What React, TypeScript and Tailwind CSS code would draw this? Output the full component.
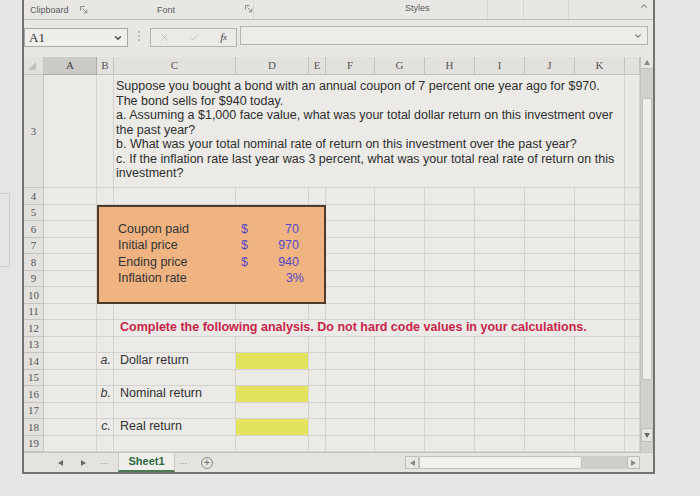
import React from "react";
import { X, Check, ChevronDown, ChevronUp } from "lucide-react";

function Launcher() {
  return (
    <svg width="8" height="8" viewBox="0 0 8 8">
      <path d="M0.5 4.5V0.5H4.5" fill="none" stroke="#8c8c8a" strokeWidth="1" />
      <path d="M2.5 2.5L6.8 6.8M6.8 3.8V6.8H3.8" fill="none" stroke="#8c8c8a" strokeWidth="1" />
    </svg>
  );
}

function Tri({ dir, color = "#5e5e5c" }: { dir: "l" | "r" | "u" | "d"; color?: string }) {
  const pts =
    dir === "l" ? "5,0 5,6 0,3" : dir === "r" ? "0,0 0,6 5,3" : dir === "u" ? "0,5 6,5 3,0" : "0,0 6,0 3,5";
  const w = dir === "l" || dir === "r" ? 5 : 6;
  const h = dir === "l" || dir === "r" ? 6 : 5;
  return (
    <svg width={w} height={h} viewBox={`0 0 ${w} ${h}`}>
      <polygon points={pts} fill={color} />
    </svg>
  );
}

const LETTERS = ["", "A", "B", "C", "D", "E", "F", "G", "H", "I", "J", "K", ""];
const ITEMS: Record<number, [string, string]> = {
  13: ["a.", "Dollar return"],
  15: ["b.", "Nominal return"],
  17: ["c.", "Real return"],
};

const QUESTION = [
  "Suppose you bought a bond with an annual coupon of 7 percent one year ago for $970.",
  "The bond sells for $940 today.",
  "a. Assuming a $1,000 face value, what was your total dollar return on this investment over",
  "the past year?",
  "b. What was your total nominal rate of return on this investment over the past year?",
  "c. If the inflation rate last year was 3 percent, what was your total real rate of return on this",
  "investment?",
];

const DATA: [string, string, string][] = [
  ["Coupon paid", "$", "70"],
  ["Initial price", "$", "970"],
  ["Ending price", "$", "940"],
  ["Inflation rate", "", "3%"],
];

function covered(r: number, c: number) {
  return (
    (r === 2 && c >= 4 && c <= 12) ||
    (r >= 4 && r <= 9 && c >= 3 && c <= 6) ||
    (r === 11 && c >= 4 && c <= 12)
  );
}

const base = "border-r border-b border-[#d3d2ce] min-w-0 overflow-hidden";
const hdr =
  "border-r border-b border-[#c4c3bf] bg-[#e2e1de] flex items-center justify-center font-['Liberation_Serif',serif] text-[11px] text-[#555]";

function Cell({ r, c }: { r: number; c: number }) {
  if (r === 1) {
    if (c === 1)
      return (
        <div className={hdr}>
          <svg width="8" height="8" viewBox="0 0 8 8" className="-ml-[3px]">
            <polygon points="8,0 8,8 0,8" fill="#c2c1bd" />
          </svg>
        </div>
      );
    if (c === 2)
      return (
        <div className="border-r border-b border-[#aeada9] bg-[#cbcac6] flex items-center justify-center font-['Liberation_Serif',serif] text-[11px] text-[#3c3c3c]">
          A
        </div>
      );
    return <div className={hdr}>{LETTERS[c - 1]}</div>;
  }
  if (c === 1) return <div className={hdr}>{r + 1}</div>;
  const item = ITEMS[r];
  if (item && c === 3)
    return (
      <div className={base + " flex items-center justify-end pr-[2px] italic text-[12.5px] text-[#3a3a3a]"}>
        {item[0]}
      </div>
    );
  if (item && c === 4)
    return (
      <div className={base + " flex items-center pl-[6px] text-[12.5px] text-[#303030] whitespace-nowrap"}>
        {item[1]}
      </div>
    );
  if (item && c === 5) return <div className={base + " bg-[#e4e35e]"} />;
  return <div className={base} />;
}

function Sheet() {
  const cells: React.ReactNode[] = [];
  for (let r = 1; r <= 18; r++) {
    for (let c = 1; c <= 13; c++) {
      if (covered(r, c)) continue;
      cells.push(<Cell key={`${r}-${c}`} r={r} c={c} />);
    }
  }
  return (
    <div className="grid w-[616px] h-[395px] shrink-0 grid-cols-[20px_53px_17px_122px_73px_17px_49px_50px_50px_50px_50px_50px_15px] grid-rows-[18px_113px_repeat(16,16.5px)] bg-[#ebeae7]">
      <div className="col-start-4 col-span-9 row-start-2 border-r border-b border-[#d3d2ce] flex flex-col justify-center pl-[2px] pb-[2px] text-[12.5px] leading-[14.6px] text-[#2e2e2e]">
        {QUESTION.map((l) => (
          <div key={l} className="whitespace-nowrap">
            {l}
          </div>
        ))}
      </div>
      <div className="col-start-3 col-span-4 row-start-4 row-span-6 bg-[#f0b482] border-2 border-[#4d3c2c] flex flex-col text-[12.5px] text-[#333]">
        <div className="h-[14.5px]" />
        {DATA.map(([label, cur, val], i) => (
          <div key={label} className="flex h-[16.5px] items-center">
            <div className="w-[15px]" />
            <div className="w-[122px] pl-[4px] whitespace-nowrap">{label}</div>
            <div className="w-[73px] flex justify-between pl-[5px] text-[#5546c6]">
              <span>{cur}</span>
              <span className={i === 3 ? "pr-[5px]" : "pr-[10px]"}>{val}</span>
            </div>
          </div>
        ))}
      </div>
      <div className="col-start-4 col-span-9 row-start-11 border-r border-b border-[#d3d2ce] flex items-center pl-[6px] font-bold text-[12.5px] text-[#c7254a] whitespace-nowrap">
        Complete the following analysis. Do not hard code values in your calculations.
      </div>
      {cells}
    </div>
  );
}

function VScroll() {
  return (
    <div className="w-[13px] h-[395px] shrink-0 flex flex-col bg-[#d1d0cd] border-l border-[#c4c3bf]">
      <div className="h-[12px] flex items-center justify-center bg-[#e6e5e2] border-b border-[#c4c3bf]">
        <Tri dir="u" color="#8a8a88" />
      </div>
      <div className="h-[29px]" />
      <div className="h-[282px] mx-[1px] bg-[#efeeeb] border border-[#bfbebb] rounded-[2px]" />
      <div className="flex-1" />
      <div className="h-[14px] flex items-center justify-center bg-[#e6e5e2] border border-[#bdbcb9]">
        <Tri dir="d" color="#6a6a68" />
      </div>
      <div className="h-[10px]" />
    </div>
  );
}

function Ribbon() {
  return (
    <div className="h-[20px] shrink-0 border-b border-[#bdbcb9] flex items-stretch text-[9px] leading-none text-[#5a5a5a] bg-[#e8e7e4]">
      <div className="w-[56px] flex items-end pb-[4px] pl-[6px]">Clipboard</div>
      <div className="w-[12px] flex items-end pb-[5px]">
        <Launcher />
      </div>
      <div className="w-[65px]" />
      <div className="w-[88px] flex items-end pb-[4px]">Font</div>
      <div className="w-[8px] flex items-end pb-[6px]">
        <Launcher />
      </div>
      <div className="w-px bg-[#d6d5d2]" />
      <div className="w-[151px]" />
      <div className="w-[82px] flex items-end pb-[6px]">Styles</div>
      <div className="w-px bg-[#d6d5d2]" />
      <div className="w-[35px]" />
      <div className="w-px bg-[#d6d5d2]" />
      <div className="w-[44px]" />
      <div className="w-px bg-[#d6d5d2]" />
      <div className="w-[70px]" />
      <div className="w-[10px] flex items-start pt-[1px]">
        <ChevronUp size={10} strokeWidth={2.5} color="#777" />
      </div>
    </div>
  );
}

function FormulaBar() {
  return (
    <div className="h-[37px] shrink-0 flex items-start bg-[#e8e7e4]">
      <div className="mt-[8px] w-[104px] h-[19px] border border-[#a9a9a6] bg-[#efeeeb] flex items-center justify-between pl-[4px] pr-[4px]">
        <span className="font-['Liberation_Serif',serif] text-[13px] text-[#333]">A1</span>
        <ChevronDown size={10} strokeWidth={3} color="#444" />
      </div>
      <div className="w-[22px] mt-[11px] flex flex-col items-center gap-[2px]">
        <div className="w-[2px] h-[2px] bg-[#bdbcb9]" />
        <div className="w-[2px] h-[2px] bg-[#bdbcb9]" />
        <div className="w-[2px] h-[2px] bg-[#bdbcb9]" />
      </div>
      <div className="mt-[8px] w-[87px] h-[19px] border border-[#b3b3b0] bg-[#ebeae7] flex items-center">
        <div className="w-[26px] flex justify-center">
          <X size={11} strokeWidth={1.5} color="#b0b0ad" />
        </div>
        <div className="w-[34px] flex justify-center">
          <Check size={11} strokeWidth={1.5} color="#b0b0ad" />
        </div>
        <div className="w-[25px] flex justify-center font-['Liberation_Serif',serif] italic text-[11px] text-[#444]">
          f<span className="text-[8px] mt-[3px]">x</span>
        </div>
      </div>
      <div className="ml-[3px] mt-[6px] w-[408px] h-[19px] border border-[#b3b3b0] bg-[#edece9] flex items-center justify-end pr-[4px]">
        <ChevronDown size={10} strokeWidth={2.5} color="#666" />
      </div>
    </div>
  );
}

function TabBar() {
  return (
    <div className="h-[20px] shrink-0 flex items-center bg-[#e4e3e0] border-t border-[#c6c5c2]">
      <div className="w-[32px]" />
      <div className="w-[8px] flex justify-center">
        <Tri dir="l" color="#6a6a68" />
      </div>
      <div className="w-[15px]" />
      <div className="w-[8px] flex justify-center">
        <Tri dir="r" color="#6a6a68" />
      </div>
      <div className="w-[10px]" />
      <div className="w-[14px] text-center text-[9px] text-[#888] leading-none -mt-[3px]">...</div>
      <div className="w-[7px]" />
      <div className="w-[57px] self-stretch flex items-center justify-center bg-[#efeeeb] border-x border-[#c9c8c5] border-b-2 border-b-[#4c7a56] text-[11px] font-bold text-[#2e6a40]">
        Sheet1
      </div>
      <div className="w-[16px] text-center text-[9px] text-[#888] leading-none -mt-[3px]">...</div>
      <div className="w-[10px]" />
      <div className="w-[12px] h-[12px] rounded-full border border-[#8a8a88] flex items-center justify-center text-[10px] leading-none text-[#6a6a68]">
        +
      </div>
      <div className="w-[192px]" />
      <div className="w-[14px] h-[13px] flex items-center justify-center bg-[#e9e8e5] border border-[#bdbcb9]">
        <Tri dir="l" color="#8a8a88" />
      </div>
      <div className="w-[163px] h-[13px] bg-[#f1f0ed] border border-[#c2c1be] rounded-[2px]" />
      <div className="w-[45px] h-[13px] bg-[#cfcecb]" />
      <div className="w-[13px] h-[13px] flex items-center justify-center bg-[#e9e8e5] border border-[#bdbcb9]">
        <Tri dir="r" color="#8a8a88" />
      </div>
      <div className="w-[13px]" />
    </div>
  );
}

export default function App() {
  return (
    <div className="w-[700px] h-[496px] overflow-hidden bg-[#e7e7e5] flex font-['Liberation_Sans',Arial,sans-serif] text-[#2e2e2e]">
      <div className="w-[22px] shrink-0 flex flex-col bg-[#e5e5e3]">
        <div className="h-[193px]" />
        <div className="h-[74px] w-[10px] border border-l-0 border-[#d0d0ce]" />
      </div>
      <div className="w-[633px] h-[474px] shrink-0 flex flex-col border-l-2 border-r-2 border-b-2 border-[#727270] bg-[#e8e7e4]">
        <Ribbon />
        <FormulaBar />
        <div className="flex h-[395px] shrink-0">
          <Sheet />
          <VScroll />
        </div>
        <TabBar />
      </div>
      <div className="flex-1 bg-[#e6e6e4]" />
    </div>
  );
}
